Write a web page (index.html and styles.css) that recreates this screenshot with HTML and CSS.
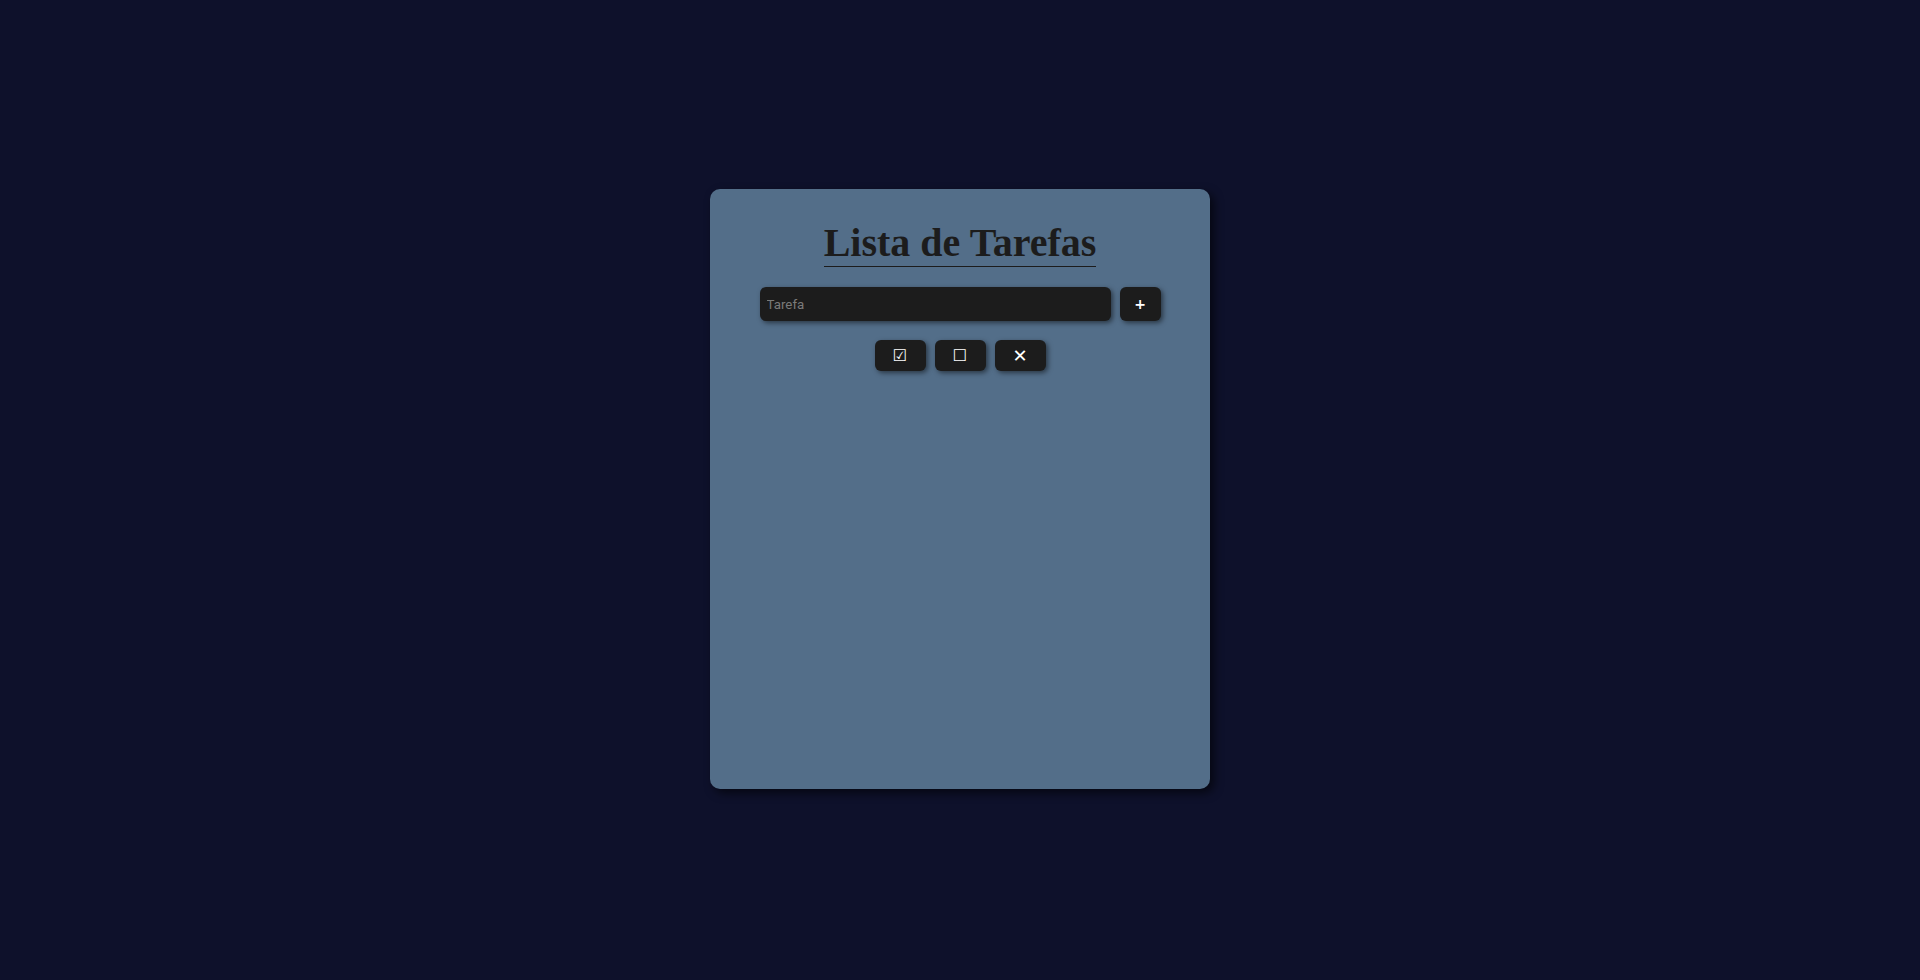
FILE: index.html
```html
<!DOCTYPE html>
<html lang="pt">
<head>
<meta charset="utf-8">
<title>Lista de Tarefas</title>
<link rel="stylesheet" href="styles.css">
</head>
<body>
  <main class="card">
    <h1 class="title">Lista de Tarefas</h1>
    <div class="add-row">
      <input class="task-input" type="text" placeholder="Tarefa">
      <button class="btn btn-add">+</button>
    </div>
    <div class="actions">
      <button class="btn btn-action">☑</button>
      <button class="btn btn-action">☐</button>
      <button class="btn btn-action btn-x">✕</button>
    </div>
    <ul class="list"></ul>
  </main>
</body>
</html>
```
FILE: styles.css
```css
html, body {
  margin: 0;
  padding: 0;
}
html {
  overflow: hidden;
}
body {
  background: #0e112b;
  height: 100vh;
  box-sizing: border-box;
  padding-bottom: 2px;
  display: flex;
  align-items: center;
  justify-content: center;
  font-family: "Liberation Serif", serif;
}
.card {
  width: 500px;
  height: 600px;
  box-sizing: border-box;
  background: #536e89;
  border-radius: 10px;
  box-shadow: 4px 4px 10px rgba(0, 0, 0, 0.6);
  display: flex;
  flex-direction: column;
  align-items: center;
  padding-top: 31px;
}
.title {
  margin: 0;
  font-family: "Liberation Serif", serif;
  font-weight: bold;
  font-size: 40px;
  line-height: 46px;
  color: #1c1c1c;
  border-bottom: 1px solid #1c1c1c;
}
.add-row {
  display: flex;
  gap: 9px;
  margin-top: 20px;
}
.task-input {
  width: 351px;
  height: 34px;
  box-sizing: border-box;
  border: none;
  border-radius: 6px;
  background: #1c1c1c;
  color: #ddd;
  padding: 0 7px;
  font-family: Roboto, "Liberation Sans", sans-serif;
  font-size: 13.333px;
  box-shadow: 2px 2px 5px rgba(0, 0, 0, 0.5);
  outline: none;
}
.task-input::placeholder {
  color: #7a7a7a;
}
.btn {
  border: none;
  border-radius: 6px;
  background: #1c1c1c;
  color: #fff;
  box-shadow: 2px 2px 5px rgba(0, 0, 0, 0.5);
  padding: 0;
  display: flex;
  align-items: center;
  justify-content: center;
  cursor: pointer;
  font-family: "DejaVu Sans", sans-serif;
  font-weight: bold;
}
.btn-add {
  width: 41px;
  height: 34px;
  font-size: 14px;
}
.actions {
  display: flex;
  gap: 9px;
  margin-top: 19px;
}
.btn-action {
  width: 51px;
  height: 31px;
  font-size: 16px;
}
.btn-x {
  font-size: 18px;
}
.list {
  margin: 0;
  padding: 0;
  list-style: none;
}
```
